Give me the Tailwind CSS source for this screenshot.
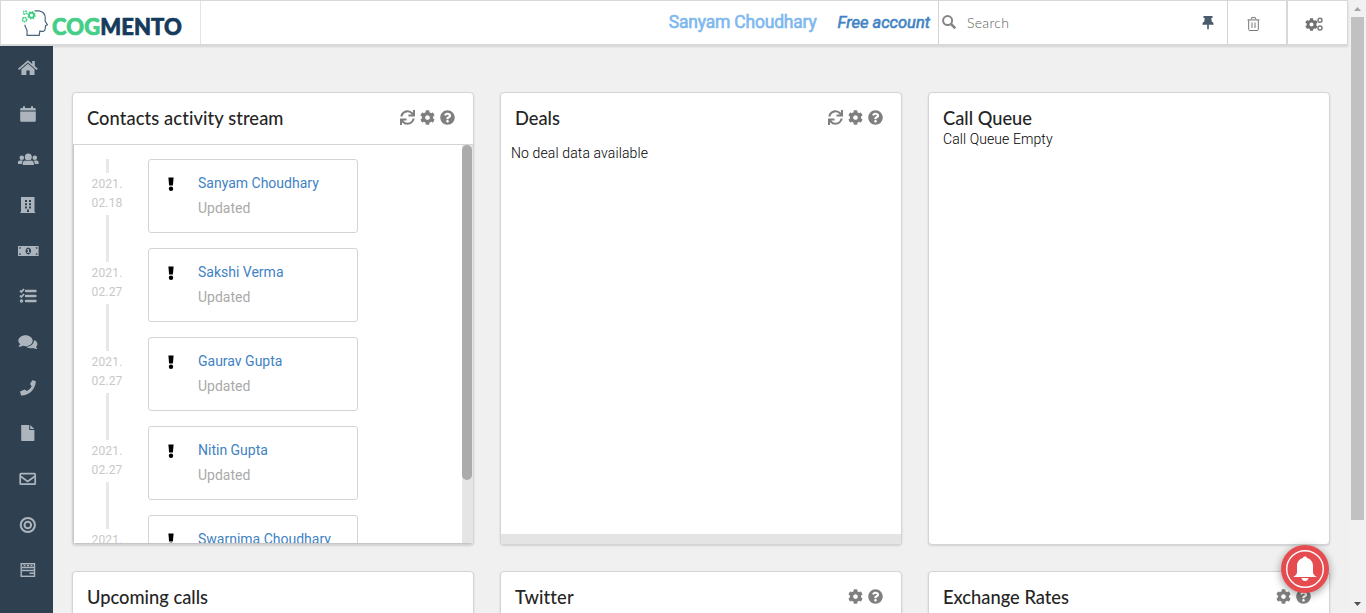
<!DOCTYPE html>
<html lang="en">
<head>
<meta charset="utf-8">
<title>Cogmento CRM</title>
<script src="https://cdn.jsdelivr.net/npm/@tailwindcss/browser@4"></script>
</head>
<body class="h-[613px] overflow-hidden bg-[#f0f0f0] font-['Roboto',sans-serif] text-sm text-[#252525]">
<svg class="hidden">
  <symbol id="cog" viewBox="0 0 512 512"><path d="M487.4 315.7l-42.6-24.6c4.3-23.2 4.3-47 0-70.2l42.6-24.6c4.9-2.8 7.1-8.6 5.5-14-11.1-35.6-30-67.8-54.7-94.6-3.8-4.1-10-5.1-14.8-2.3L380.8 110c-17.9-15.4-38.5-27.3-60.8-35.1V25.8c0-5.6-3.9-10.5-9.4-11.7-36.7-8.2-74.3-7.8-109.2 0-5.5 1.2-9.4 6.1-9.4 11.7V75c-22.2 7.9-42.8 19.8-60.8 35.1L88.7 85.5c-4.9-2.8-11-1.9-14.8 2.3-24.7 26.7-43.6 58.9-54.7 94.6-1.7 5.4.6 11.2 5.5 14L67.3 221c-4.3 23.2-4.3 47 0 70.2l-42.6 24.6c-4.9 2.8-7.1 8.6-5.5 14 11.1 35.6 30 67.8 54.7 94.6 3.8 4.1 10 5.1 14.8 2.3l42.6-24.6c17.9 15.4 38.5 27.3 60.8 35.1v49.2c0 5.6 3.9 10.5 9.4 11.7 36.7 8.2 74.3 7.8 109.2 0 5.5-1.2 9.4-6.1 9.4-11.7v-49.2c22.2-7.9 42.8-19.8 60.8-35.1l42.6 24.6c4.9 2.8 11 1.9 14.8-2.3 24.7-26.7 43.6-58.9 54.7-94.6 1.5-5.5-.7-11.3-5.6-14.1zM256 336c-44.1 0-80-35.9-80-80s35.9-80 80-80 80 35.9 80 80-35.9 80-80 80z"/></symbol>
  <symbol id="help" viewBox="0 0 512 512"><path d="M504 256c0 136.997-111.043 248-248 248S8 392.997 8 256C8 119.083 119.043 8 256 8s248 111.083 248 248zM262.655 90c-54.497 0-89.255 22.957-116.549 63.758-3.536 5.286-2.353 12.415 2.715 16.258l34.699 26.31c5.205 3.947 12.621 3.008 16.665-2.122 17.864-22.658 30.113-35.797 57.303-35.797 20.429 0 45.698 13.148 45.698 32.958 0 14.976-12.363 22.667-32.534 33.976C247.128 238.528 216 254.941 216 296v4c0 6.627 5.373 12 12 12h56c6.627 0 12-5.373 12-12v-1.333c0-28.462 83.186-29.647 83.186-106.667 0-58.002-60.165-102-116.531-102zM256 338c-25.365 0-46 20.635-46 46 0 25.364 20.635 46 46 46s46-20.636 46-46c0-25.365-20.635-46-46-46z"/></symbol>
  <symbol id="sync" viewBox="0 0 512 512"><path d="M440.65 12.57l4 82.77A247.16 247.16 0 0 0 255.83 8C134.73 8 33.91 94.92 12.29 209.82A12 12 0 0 0 24.09 224h49.05a12 12 0 0 0 11.67-9.26 175.91 175.91 0 0 1 317-56.94l-101.46-4.86a12 12 0 0 0-12.57 12v47.41a12 12 0 0 0 12 12H500a12 12 0 0 0 12-12V12a12 12 0 0 0-12-12h-47.37a12 12 0 0 0-11.98 12.57zM255.83 432a175.61 175.61 0 0 1-146-77.8l101.8 4.87a12 12 0 0 0 12.57-12v-47.4a12 12 0 0 0-12-12H12a12 12 0 0 0-12 12V500a12 12 0 0 0 12 12h47.35a12 12 0 0 0 12-12.6l-4.15-82.57A247.17 247.17 0 0 0 255.83 504c121.11 0 221.93-86.92 243.55-201.82a12 12 0 0 0-11.8-14.18h-49.05a12 12 0 0 0-11.67 9.26A175.86 175.86 0 0 1 255.83 432z"/></symbol>
  <symbol id="bang" viewBox="0 0 6 15"><path d="M.4.6h5.2L4.9 8.600H1.1z"/><circle cx="3" cy="11.700" r="2.200"/></symbol>
</svg>
<div class="flex h-full">
  <div class="flex w-[1349px] flex-col">
    <header class="relative z-10 -mb-px flex h-[46px] w-[1348px] shrink-0 border-t border-b-2 border-l border-[#d8d8d8] bg-white shadow-[0_1px_2px_rgba(34,36,38,0.12)]">
      <div class="flex w-[200px] border-r border-[#e4e4e4] pl-5">
        <svg class="mt-2 h-[28px] w-[30px] shrink-0" viewBox="1 0 30 28" fill="none">
          <path d="M14.5 1.8h4.5c4 .6 6.3 3.600 6.300 7.500 0 1.200-.6 2.200.1 3.400l2 3-1.900.9c-.2 2.700.2 5.400-2.400 5.700l-3.300-.2-.6 4.300H7l.1-4.400c-.3-2.200-2.200-3.700-2.200-6.200" stroke="#4a6580" stroke-width="1.200"/>
          <g stroke="#43cf87"><circle cx="11.500" cy="6.300" r="2.500" stroke-width="1.900"/><circle cx="11.500" cy="6.300" r="3.700" stroke-width="1.200" stroke-dasharray="1.450"/><circle cx="5" cy="3.600" r="1.700" stroke-width="1.400" stroke-dasharray="1.800 .6"/><circle cx="4.600" cy="10.600" r="2.100" stroke-width="1.600" stroke-dasharray="1.800 .4"/></g>
        </svg>
        <div class="mt-[11px] ml-px w-[132px] text-[22px] leading-[29px] font-black tracking-[0.1px] whitespace-nowrap text-[#153b5c] font-['Lato',sans-serif] [-webkit-text-stroke:0.7px]"><span class="text-[#43cf87]">COG</span>MENTO</div>
      </div>
      <div class="flex grow justify-end pr-[8px] text-[17.500px] leading-[43px] whitespace-nowrap [-webkit-text-stroke:0.6px]">
        <span class="mr-[21px] tracking-[-0.2px] text-[#7eb8ee]">Sanyam Choudhary</span>
        <span class="text-[16.500px] text-[#4183c4] italic">Free account</span>
      </div>
      <div class="flex w-[290px] items-center border-r border-l border-[#d4d4d5] pl-[3px]">
        <svg class="-mt-px h-[14px] w-[14px]" viewBox="0 0 14 14" fill="none" stroke="#858585" stroke-width="2"><circle cx="5.600" cy="5.600" r="4.500"/><path d="M9 9l4.300 4.300" stroke-width="2.500"/></svg>
        <span class="mt-px ml-[11px] font-['Lato',sans-serif] text-[14px] font-light tracking-[0.3px] text-[#606060]">Search</span>
        <svg class="mt-px mr-[13px] ml-auto h-[14px] w-[12px] fill-[#4b5b6b]" viewBox="0 0 12 14"><path d="M1.500 0h9v2H9.300l.4 3.600c1.300.7 1.900 1.700 1.900 3.200H6.800v3.600L6 14l-.8-1.600V8.800H.4c0-1.500.6-2.500 1.900-3.200L2.700 2H1.500z"/></svg>
      </div>
      <div class="flex w-[60px] items-center border-r-2 border-[#d8d8d8] pl-[19px]">
        <svg class="mt-[2px] h-[14px] w-[13px]" viewBox="0 0 13 14" fill="none" stroke="#777"><path d="M.5 2.900h12M4 2.500L4.600.6h3.800L9 2.500M1.700 3v9.500q0 1 1 1h7.600q1 0 1-1V3M5 5.500v5.500M8 5.500v5.500"/></svg>
      </div>
      <div class="flex w-[60px] items-center border-r border-[#d8d8d8] pl-[17px]">
        <svg class="mt-[2px] h-[14px] w-[19px] fill-[#707070]" viewBox="0 0 19 14"><use href="#cog" x="0" y="1" width="13" height="13"/><g fill="none" stroke="#777" stroke-width="1.400"><circle cx="15" cy="3.200" r="2"/><circle cx="15" cy="11" r="2"/></g></svg>
      </div>
    </header>
    <div class="flex min-h-0 grow">
      <nav class="grid w-[53px] shrink-0 auto-rows-[45.660px] content-start items-center bg-[#2f4050] pt-[0.2px] pl-[17px] fill-[#acb5bd] text-[#acb5bd] [&>svg]:h-[18px] [&>svg]:w-[22px]">
        <svg viewBox="0 0 22 18"><path d="M10.900 1.200L1 9.700l1.200 1.200 8.700-7.400 8.700 7.400 1.200-1.200-3-2.600V2h-2.600v2.900zM10.900 4.700L4.400 10.200v5.900h5v-4.500h3.200v4.500h4.900v-5.900z"/></svg>
        <svg viewBox="0 0 22 18"><path d="M3.200 5.500V4.300Q3.200 3 4.500 3H6V1.200h2V3h6V1.200h2V3h1.500q1.300 0 1.300 1.300v1.200zM3.200 6.500h15.600v9q0 1.300-1.300 1.300h-13q-1.300 0-1.300-1.300z"/></svg>
        <svg viewBox="0 0 22 18"><circle cx="11.300" cy="7" r="3.500"/><circle cx="4.800" cy="7.800" r="2.300"/><circle cx="17.800" cy="7.800" r="2.300"/><path d="M5.700 15v-1.400c0-1.900 1.200-3.100 3-3.100 1.600.8 3.500.8 5.200 0 1.800 0 3 1.200 3 3.100V15zM1 14v-1.900q0-1.700 1.600-1.700h3.300q-1 1-1.100 3.600zM21.600 14v-1.900q0-1.700-1.600-1.700h-3.300q1 1 1.100 3.600z"/></svg>
        <svg viewBox="0 0 22 18"><path fill-rule="evenodd" d="M4 1h13.500v15h.7v1H3.300v-1H4zM8 4v2h2V4zM12 4v2h2V4zM8 7.200v2h2v-2zM12 7.200v2h2v-2zM8 10.400v2h2v-2zM12 10.400v2h2v-2zM10 13.500V16h2v-2.500z"/></svg>
        <svg viewBox="0 0 22 18"><path fill-rule="evenodd" d="M1 4h20.600v10H1zM2.300 7Q4 7 4 5.200H2.300zM18.600 5.200Q18.600 7 20.300 7V5.200zM2.300 11v1.800H4Q4 11 2.300 11M20.300 11q-1.700 0-1.700 1.800h1.700zM11.300 5.500a2.700 3.500 0 1 0 .01 0zM9.900 10.800v-.8h.9V8.100l-.9.2v-.9l1.300-.5h.8V10h.9v.8z"/></svg>
        <svg viewBox="0 0 22 18" fill="none" stroke="currentColor"><path d="M9 4h9.500M9 9h9.500M9 14h9.500" stroke-width="2.400" stroke-linecap="round"/><path d="M3 3.600l1.400 1.300L7 2M3 8.600l1.400 1.300L7 7" stroke-width="1.800"/><circle cx="4.500" cy="14.100" r="1" stroke-width="1.500"/></svg>
        <svg viewBox="0 0 22 18"><path d="M8.500 2.200c4 0 7.200 2.500 7.200 5.500s-3.200 5.500-7.200 5.500q-1.400 0-2.600-.4-1.800 1.100-4.600.8 1.400-1.200 1.800-2.500Q1.300 9.600 1.300 7.700c0-3 3.200-5.500 7.200-5.500zM17 7c4.200 1.700 4.200 5 2 7q.4 1 1.500 2-2.600.2-4.200-.9-4.700.9-7-1.400C13.900 13.800 16.900 11 17 7"/></svg>
        <svg viewBox="0 0 22 18"><path d="M18.800 2.100L15.200 1.200 13 5l1.700 2.200Q13 10.500 9.900 12.100l-2.300-1.500-4.500 1.900.9 4.100c8.100.3 14.800-6.400 14.800-14.500z"/></svg>
        <svg viewBox="0 0 22 18"><path d="M4.200 1h8v5h5.200v10.200q0 .8-.8.800H5q-.8 0-.8-.8zM13.200 1l4.200 4h-4.200z"/></svg>
        <svg viewBox="0 0 22 18" fill="none" stroke="currentColor" stroke-width="1.700"><rect x="3.200" y="3.700" width="15" height="10.500" rx=".8"/><path d="M3.500 6.200l7.200 5.200 7.200-5.200"/></svg>
        <svg viewBox="0 0 22 18" fill="none" stroke="currentColor" stroke-width="2"><circle cx="10.800" cy="9" r="7.100"/><circle cx="10.800" cy="9" r="3.300"/></svg>
        <svg viewBox="0 0 22 18" fill="none" stroke="currentColor" stroke-width="1.400"><rect x="4.200" y="2.700" width="13.300" height="12.600"/><path d="M5 6.500h12M5 9.500h12M6.500 4.500h2M10 4.500h2M13.500 4.500h2M12.500 12.200H17"/></svg>
      </nav>
      <main class="grid grow grid-cols-[402px_402px_402px] grid-rows-[453px_453px] gap-[26px] overflow-hidden pt-[47px] pl-[19px] [&>section]:overflow-hidden [&>section]:rounded [&>section]:border [&>section]:border-[#d4d4d5] [&>section]:bg-white [&>section]:shadow-[0_1px_2px_rgba(34,36,38,0.15)] [&_h2]:font-['Lato',sans-serif] [&_h2]:text-[18.300px] [&_h2]:leading-[22px] [&_h2]:font-medium [&_h2]:[font-variant-ligatures:none] [&_.tools]:flex [&_.tools]:gap-[5px] [&_.tools]:pt-[3px] [&_.tools>svg]:h-[15px] [&_.tools>svg]:w-[15px] [&_.tools>svg]:fill-[#7f7f7f]">
        <section class="flex flex-col">
          <div class="flex h-[52px] shrink-0 justify-between border-b border-[#d4d4d5] px-[14px] pt-[14px] pr-[18px]"><h2 class="tracking-[0.1px]">Contacts activity stream</h2><div class="tools"><svg class="-mt-[0.5px]"><use href="#sync"/></svg><svg class="-mt-[0.5px]"><use href="#cog"/></svg><svg class="-mt-[0.5px]"><use href="#help"/></svg></div></div>
          <div class="flex min-h-0 grow border-b border-l border-[#c6c6c6]">
            <div id="feed" class="flex grow flex-col overflow-hidden pt-[14px] pl-[18px]"></div>
            <div class="w-[11px] bg-[#e5e5e5]"><div class="h-[335px] w-[10px] rounded-full bg-[#ababab]"></div></div>
          </div>
        </section>
        <section class="flex flex-col">
          <div class="flex h-[52px] shrink-0 justify-between px-[14px] pt-[14px] pr-[18px]"><h2>Deals</h2><div class="tools"><svg class="-mt-[0.5px]"><use href="#sync"/></svg><svg class="-mt-[0.5px]"><use href="#cog"/></svg><svg class="-mt-[0.5px]"><use href="#help"/></svg></div></div>
          <p class="pl-[10px] leading-4 font-light tracking-[0.12px] text-black">No deal data available</p>
          <div class="mt-auto h-[10px] bg-[#e4e4e4]"></div>
        </section>
        <section class="px-[14px] pt-[14px]"><h2>Call Queue</h2><p class="mt-[2px] leading-4 font-light tracking-[0.08px] text-black">Call Queue Empty</p></section>
        <section class="px-[14px] pt-[14px]"><h2>Upcoming calls</h2></section>
        <section class="flex justify-between px-[14px] pt-[14px] pr-[18px]"><h2 class="tracking-[0.15px]">Twitter</h2><div class="tools"><svg class="-mt-[0.5px]"><use href="#cog"/></svg><svg class="-mt-[0.5px]"><use href="#help"/></svg></div></section>
        <section class="flex justify-between px-[14px] pt-[14px] pr-[18px]"><h2>Exchange Rates</h2><div class="tools"><svg class="-mt-[0.5px]"><use href="#cog"/></svg><svg class="-mt-[0.5px]"><use href="#help"/></svg></div></section>
      </main>
    </div>
  </div>
  <div class="flex w-[17px] flex-col items-center justify-between bg-[#f1f1f1]">
    <div><svg class="h-[17px] w-[17px] fill-[#a3a3a3]" viewBox="0 0 17 17"><path d="M5 11l3.500-4L12 11z"/></svg><div class="mx-[2px] h-[503px] w-[13px] bg-[#c1c1c1]"></div></div>
    <svg class="h-[17px] w-[17px] fill-[#505050]" viewBox="0 0 17 17"><path d="M5 6h7l-3.500 4z"/></svg>
  </div>
</div>
<div class="fixed top-[545px] left-[1281px] z-20 h-12 w-12 rounded-full bg-[#e64b4f] shadow-[0_2px_8px_rgba(0,0,0,0.4)]">
  <svg class="h-12 w-12 fill-white" viewBox="0 0 48 48"><circle cx="24" cy="24" r="18.300" fill="none" stroke="#fff" stroke-width="1.400"/><path d="M24 11.500c1 0 1.800.5 2 1.400 3.900 1 6 4 6 8.100v6.500c0 1.800 1.800 3.300 3.800 4.500H12.200c2-1.200 3.800-2.700 3.800-4.500V21c0-4.100 2.100-7.100 6-8.100.2-.9 1-1.400 2-1.400zM20.500 33h7c-.3 1.800-1.700 3-3.500 3s-3.200-1.200-3.500-3z"/></svg>
</div>
<template id="entry">
  <article class="flex h-[89px] shrink-0">
    <div class="flex w-[30px] flex-col items-center text-[12px] leading-[19px] tracking-[0.15px] text-[#c8c8c8]">
      <div class="h-[14px] w-[3px] bg-[#e8e8e8]"></div>
      <div class="date pt-[2px] text-center"><div></div><div></div></div>
      <div class="mt-[2px] h-[33px] w-[3px] shrink-0 bg-[#e8e8e8]"></div>
    </div>
    <div class="ml-[26px] flex h-[74px] w-[210px] rounded-[3px] border border-[#d4d4d5]">
      <svg class="mt-[17px] ml-[19px] h-[15px] w-[6px]"><use href="#bang"/></svg>
      <div class="ml-[24px] pt-[15px] leading-4 whitespace-nowrap"><div class="name text-[#4183c4]"></div><div class="mt-[9px] text-[#aaa]">Updated</div></div>
    </div>
  </article>
</template>
<script>
const people = [["Sanyam Choudhary","02.18"],["Sakshi Verma","02.27"],["Gaurav Gupta","02.27"],["Nitin Gupta","02.27"],["Swarnima Choudhary","02.27"]];
for (const [name, day] of people) {
  const node = document.getElementById("entry").content.cloneNode(true);
  node.querySelector(".name").textContent = name;
  const rows = node.querySelectorAll(".date > div");
  rows[0].textContent = "2021.";
  rows[1].textContent = day;
  document.getElementById("feed").append(node);
}
</script>
</body>
</html>
